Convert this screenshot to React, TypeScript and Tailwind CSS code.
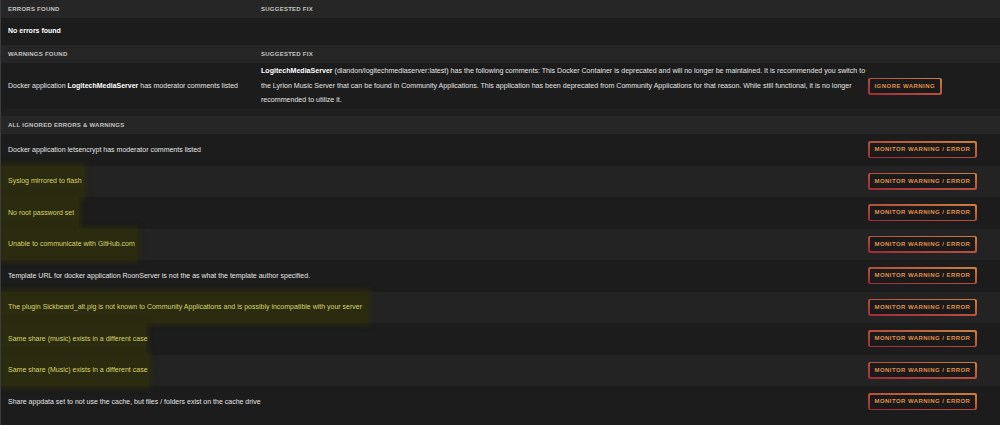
import React from "react";

const font = { fontFamily: '"Liberation Sans", Arial, sans-serif' };

function Btn({ label }: { label: string }) {
  return (
    <div className="rounded-[2px] bg-gradient-to-tr from-[#9c2a3a] via-[#b4503c] to-[#cc8040] p-[1.5px]">
      <div className="rounded-[1px] bg-[#1a1a1a] h-[14px] px-[5px] flex items-center text-[6px] font-bold tracking-[0.45px] text-[#e0904a] whitespace-nowrap">
        {label}
      </div>
    </div>
  );
}

function Header({ left, right }: { left: string; right?: string }) {
  return (
    <div className="h-[18px] bg-[#262626] flex items-center text-[6px] font-bold tracking-[0.25px] text-[#c4c4c4] uppercase">
      <div className="w-[260px] pl-[7px]">{left}</div>
      {right && <div>{right}</div>}
    </div>
  );
}

type Item = { text: string; hl?: number };

const items: Item[] = [
  { text: "Docker application letsencrypt has moderator comments listed" },
  { text: "Syslog mirrored to flash", hl: 83 },
  { text: "No root password set", hl: 78 },
  { text: "Unable to communicate with GitHub.com", hl: 136 },
  { text: "Template URL for docker application RoonServer is not the as what the template author specified." },
  { text: "The plugin Sickbeard_alt.plg is not known to Community Applications and is possibly incompatible with your server", hl: 367 },
  { text: "Same share (music) exists in a different case", hl: 145 },
  { text: "Same share (Music) exists in a different case", hl: 148 },
  { text: "Share appdata set to not use the cache, but files / folders exist on the cache drive" },
];

export default function App() {
  return (
    <div style={font} className="w-[1000px] h-[425px] overflow-hidden bg-[#1c1c1c] text-[#e4e4e4] border-l border-[#3c3c3c]">
      <Header left="Errors Found" right="Suggested Fix" />
      <div className="h-[27px] bg-[#1c1c1c] flex items-center pl-[7px] text-[7px] font-bold text-white">No errors found</div>
      <Header left="Warnings Found" right="Suggested Fix" />
      <div className="h-[46px] bg-[#1c1c1c] flex items-center text-[7px]">
        <div className="w-[260px] pl-[7px] whitespace-nowrap">
          Docker application <b className="text-white">LogitechMediaServer</b> has moderator comments listed
        </div>
        <div className="flex-1 leading-[14.5px] whitespace-nowrap text-[7.08px]">
          <div>
            <b className="text-white">LogitechMediaServer</b> (dlandon/logitechmediaserver:latest) has the following comments: This Docker Container is deprecated and will no longer be maintained. It is recommended you switch to
          </div>
          <div>
            the Lyrion Music Server that can be found in Community Applications. This application has been deprecated from Community Applications for that reason. While still functional, it is no longer
          </div>
          <div>recommended to utilize it.</div>
        </div>
        <div className="w-[132px] flex">
          <Btn label="IGNORE WARNING" />
        </div>
      </div>
      <div className="h-[7px] bg-[#1f1f1f]" />
      <Header left="All Ignored Errors & Warnings" />
      {items.map((it, i) => (
        <div
          key={i}
          className={`h-[31.5px] flex items-stretch text-[7px] ${i % 2 === 0 ? "bg-[#1c1c1c]" : "bg-[#232323]"}`}
        >
          <div className="flex-1 flex items-stretch">
            {it.hl ? (
              <div
                className="flex items-center pl-[7px] bg-[#2b2b10] shadow-[0_0_5px_2px_#2b2b10] text-[#d6d46a] whitespace-nowrap"
                style={{ width: it.hl }}
              >
                {it.text}
              </div>
            ) : (
              <div className="flex items-center pl-[7px] whitespace-nowrap">{it.text}</div>
            )}
          </div>
          <div className="w-[132px] flex items-center">
            <Btn label="MONITOR WARNING / ERROR" />
          </div>
        </div>
      ))}
    </div>
  );
}
